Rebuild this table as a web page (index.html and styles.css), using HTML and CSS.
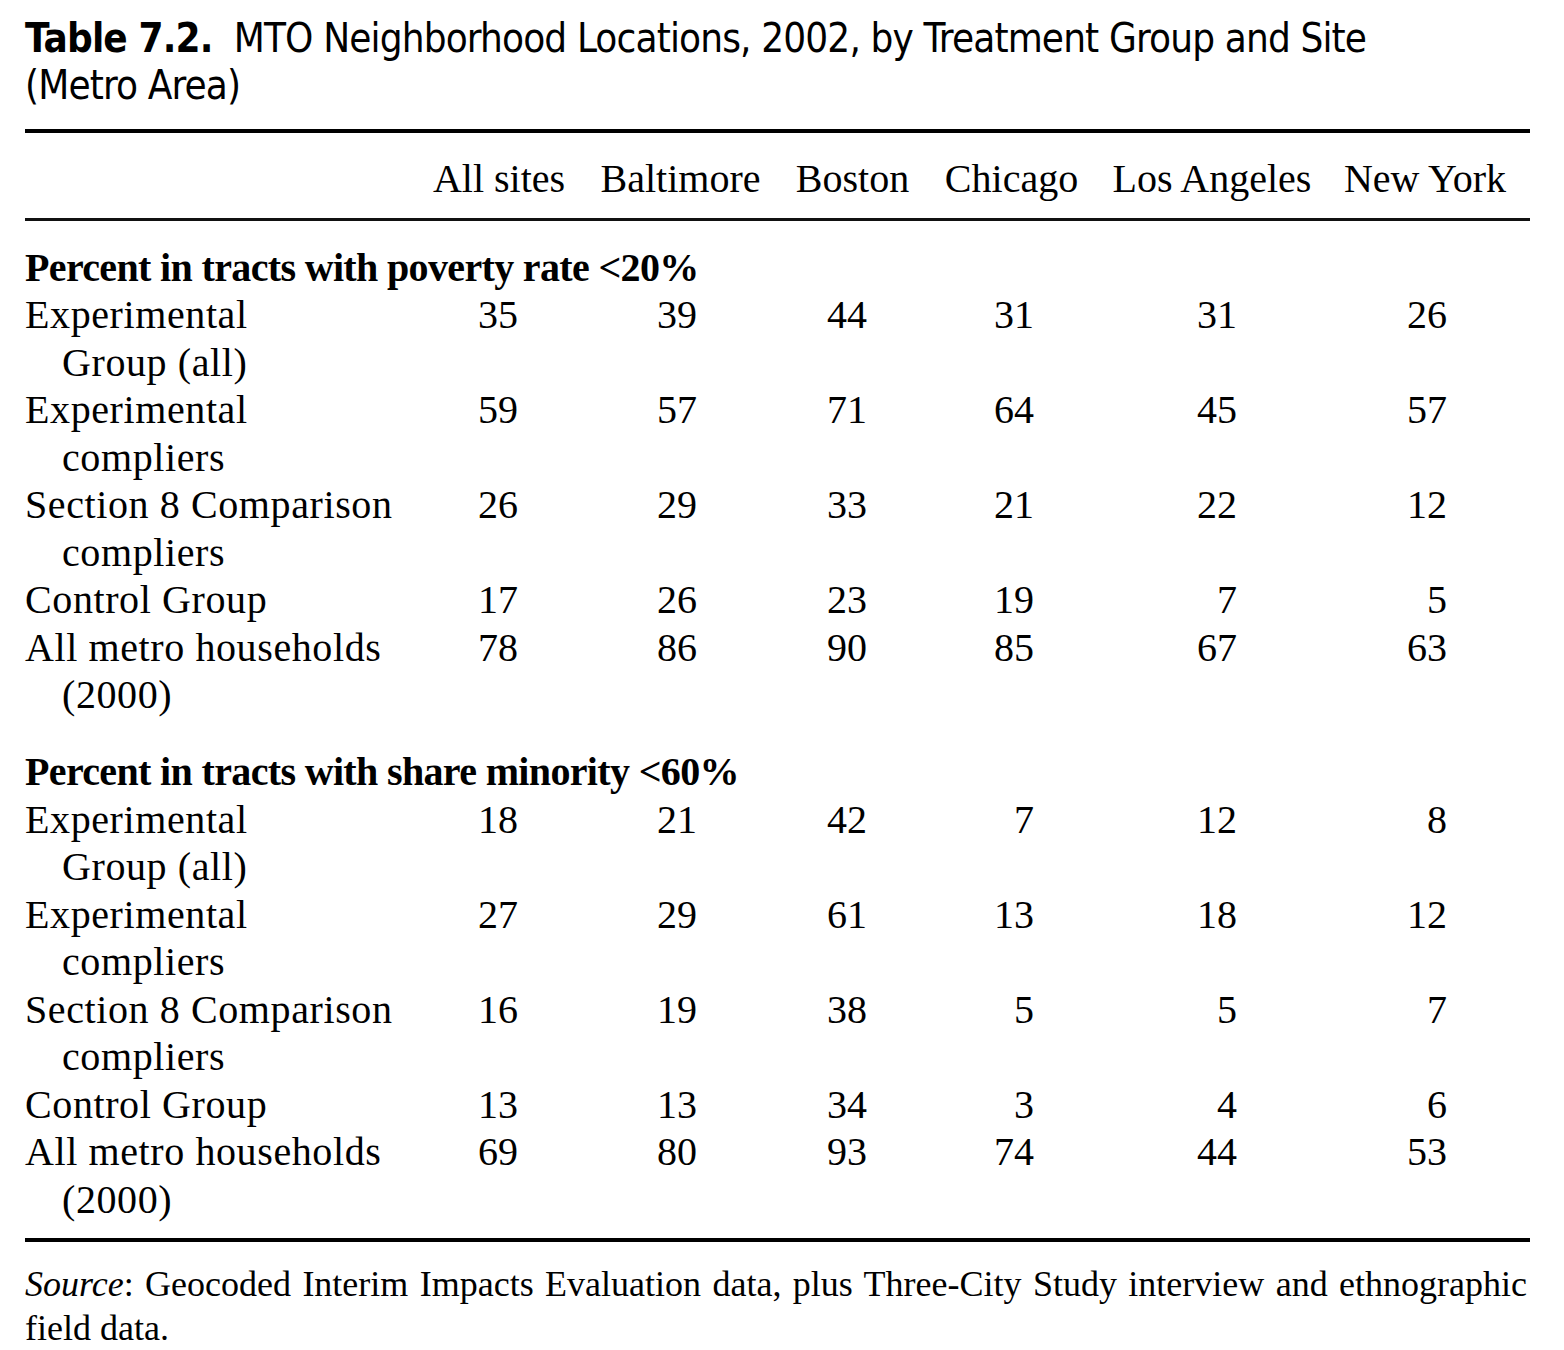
FILE: index.html
```html
<!DOCTYPE html>
<html lang="en">
<head>
<meta charset="utf-8">
<title>Table 7.2. MTO Neighborhood Locations</title>
<link rel="stylesheet" href="styles.css">
</head>
<body>
<div class="page">
  <h1 class="title"><span class="tnum">Table 7.2.</span>&nbsp; MTO Neighborhood Locations, 2002, by Treatment Group and Site<br>(Metro Area)</h1>
  <table class="data">
    <colgroup>
      <col class="c-stub"><col class="c1"><col class="c2"><col class="c3"><col class="c4"><col class="c5"><col class="c6">
    </colgroup>
    <thead>
      <tr>
        <th class="stub"></th>
        <th>All sites</th>
        <th>Baltimore</th>
        <th>Boston</th>
        <th>Chicago</th>
        <th>Los Angeles</th>
        <th class="last">New York</th>
      </tr>
    </thead>
    <tbody class="group">
      <tr class="section"><th colspan="7">Percent in tracts with poverty rate &lt;20%</th></tr>
      <tr><th class="label">Experimental<br>Group (all)</th><td class="n1">35</td><td class="n2">39</td><td class="n3">44</td><td class="n4">31</td><td class="n5">31</td><td class="n6">26</td></tr>
      <tr><th class="label">Experimental<br>compliers</th><td class="n1">59</td><td class="n2">57</td><td class="n3">71</td><td class="n4">64</td><td class="n5">45</td><td class="n6">57</td></tr>
      <tr><th class="label">Section 8 Comparison<br>compliers</th><td class="n1">26</td><td class="n2">29</td><td class="n3">33</td><td class="n4">21</td><td class="n5">22</td><td class="n6">12</td></tr>
      <tr><th class="label">Control Group</th><td class="n1">17</td><td class="n2">26</td><td class="n3">23</td><td class="n4">19</td><td class="n5">7</td><td class="n6">5</td></tr>
      <tr><th class="label">All metro households<br>(2000)</th><td class="n1">78</td><td class="n2">86</td><td class="n3">90</td><td class="n4">85</td><td class="n5">67</td><td class="n6">63</td></tr>
    </tbody>
    <tbody class="group group-2">
      <tr class="section"><th colspan="7">Percent in tracts with share minority &lt;60%</th></tr>
      <tr><th class="label">Experimental<br>Group (all)</th><td class="n1">18</td><td class="n2">21</td><td class="n3">42</td><td class="n4">7</td><td class="n5">12</td><td class="n6">8</td></tr>
      <tr><th class="label">Experimental<br>compliers</th><td class="n1">27</td><td class="n2">29</td><td class="n3">61</td><td class="n4">13</td><td class="n5">18</td><td class="n6">12</td></tr>
      <tr><th class="label">Section 8 Comparison<br>compliers</th><td class="n1">16</td><td class="n2">19</td><td class="n3">38</td><td class="n4">5</td><td class="n5">5</td><td class="n6">7</td></tr>
      <tr><th class="label">Control Group</th><td class="n1">13</td><td class="n2">13</td><td class="n3">34</td><td class="n4">3</td><td class="n5">4</td><td class="n6">6</td></tr>
      <tr class="final"><th class="label">All metro households<br>(2000)</th><td class="n1">69</td><td class="n2">80</td><td class="n3">93</td><td class="n4">74</td><td class="n5">44</td><td class="n6">53</td></tr>
    </tbody>
  </table>
  <p class="source"><span class="source-line"><em>Source</em>: Geocoded Interim Impacts Evaluation data, plus Three-City Study interview and ethnographic</span>field data.</p>
</div>
</body>
</html>
```

FILE: styles.css
```css
html, body {
  margin: 0;
  padding: 0;
  background: #ffffff;
  color: #000000;
}

.page {
  width: 1505px;
  padding: 0 0 0 25px;
}

.title {
  margin: 0;
  padding-top: 15px;
  font-family: "Liberation Sans Narrow", "DejaVu Sans Condensed", "Open Sans", sans-serif;
  font-stretch: condensed;
  font-weight: 400;
  font-size: 40px;
  line-height: 47px;
  letter-spacing: -0.85px;
}

.tnum {
  font-weight: 700;
}

.data {
  margin-top: 20px;
  width: 1505px;
  table-layout: fixed;
  border-collapse: separate;
  border-spacing: 0;
  border-top: 4px solid #000;
  border-bottom: 4px solid #000;
  font-family: "Liberation Serif", "Times New Roman", serif;
  font-size: 40px;
  line-height: 47.5px;
}

.c-stub { width: 391px; }
.c1 { width: 166px; }
.c2 { width: 197px; }
.c3 { width: 147px; }
.c4 { width: 171px; }
.c5 { width: 230px; }
.c6 { width: 203px; }

.data thead th {
  font-weight: 400;
  text-align: center;
  white-space: nowrap;
  padding: 22px 0 15px;
  border-bottom: 3px solid #111;
}

.data thead th.last {
  padding-right: 7px;
}

.data th,
.data td {
  padding: 0;
  vertical-align: top;
}

.section th {
  text-align: left;
  font-weight: 700;
  white-space: nowrap;
  letter-spacing: -0.65px;
}

.group > .section:first-child th {
  padding-top: 23px;
}

.group-2 > .section:first-child th {
  padding-top: 29.5px;
}

.label {
  text-align: left;
  font-weight: 400;
  padding-left: 37px !important;
  text-indent: -37px;
  white-space: nowrap;
  letter-spacing: 0.6px;
}

.data td {
  text-align: right;
}

.n1 { padding-right: 64px !important; }
.n2 { padding-right: 82px !important; }
.n3 { padding-right: 59px !important; }
.n4 { padding-right: 63px !important; }
.n5 { padding-right: 90px !important; }
.n6 { padding-right: 83px !important; }

.final th,
.final td {
  padding-bottom: 15px;
}

.source {
  margin: 20px 0 0;
  width: 1502px;
  font-family: "Liberation Serif", "Times New Roman", serif;
  font-size: 36px;
  line-height: 44px;
}

.source-line {
  display: block;
  text-align: justify;
  text-align-last: justify;
  white-space: nowrap;
}
```
